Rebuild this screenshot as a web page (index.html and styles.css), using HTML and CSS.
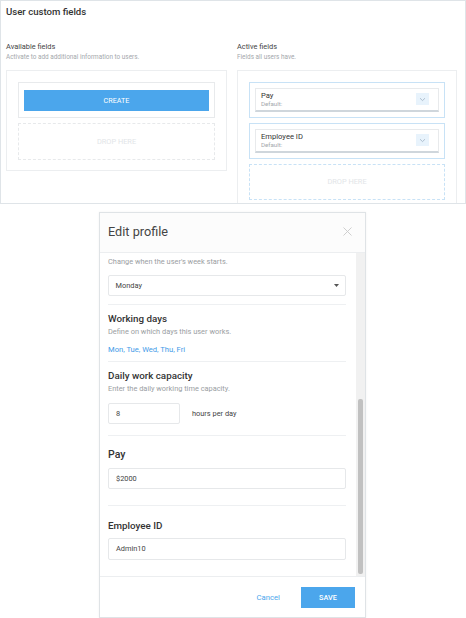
FILE: index.html
```html
<!DOCTYPE html>
<html>
<head>
<meta charset="utf-8">
<link rel="stylesheet" href="styles.css">
</head>
<body>
<div class="page">
  <section class="fields-panel">
    <h1 class="panel-title">User custom fields</h1>
    <div class="columns">
      <div class="column">
        <h2 class="col-title">Available fields</h2>
        <p class="col-sub">Activate to add additional information to users.</p>
        <div class="col-box">
          <div class="create-card"><button class="create-btn">CREATE</button></div>
          <div class="drop drop-gray">DROP HERE</div>
        </div>
      </div>
      <div class="column">
        <h2 class="col-title">Active fields</h2>
        <p class="col-sub">Fields all users have.</p>
        <div class="col-box col-box-open">
          <div class="active-item">
            <div class="field-card">
              <div class="field-text">
                <div class="field-name">Pay</div>
                <div class="field-default">Default:</div>
              </div>
              <span class="chev"><svg width="7" height="5" viewBox="0 0 7 5"><path d="M1 1.2 L3.5 3.6 L6 1.2" fill="none" stroke="#9fb3c4" stroke-width="0.8"/></svg></span>
            </div>
          </div>
          <div class="active-item">
            <div class="field-card">
              <div class="field-text">
                <div class="field-name">Employee ID</div>
                <div class="field-default">Default:</div>
              </div>
              <span class="chev"><svg width="7" height="5" viewBox="0 0 7 5"><path d="M1 1.2 L3.5 3.6 L6 1.2" fill="none" stroke="#9fb3c4" stroke-width="0.8"/></svg></span>
            </div>
          </div>
          <div class="drop drop-blue">DROP HERE</div>
        </div>
      </div>
    </div>
  </section>

  <div class="modal-wrap">
    <div class="modal">
      <header class="modal-head">
        <span class="modal-title">Edit profile</span>
        <svg class="close" width="9" height="9" viewBox="0 0 9 9"><path d="M0.5 0.5 L8.5 8.5 M8.5 0.5 L0.5 8.5" stroke="#c9c9c9" stroke-width="0.9"/></svg>
      </header>
      <div class="modal-body">
        <div class="scroll-content">
          <div class="sec sec-week">
            <p class="sec-sub">Change when the user's week starts.</p>
            <div class="select">
              <span>Monday</span>
              <svg width="5" height="3" viewBox="0 0 5 3"><path d="M0 0 H5 L2.5 3 Z" fill="#555"/></svg>
            </div>
          </div>
          <div class="sec sec-days">
            <h3 class="sec-title">Working days</h3>
            <p class="sec-sub sub-tight">Define on which days this user works.</p>
            <p class="days">Mon, Tue, Wed, Thu, Fri</p>
          </div>
          <div class="sec sec-cap">
            <h3 class="sec-title">Daily work capacity</h3>
            <p class="sec-sub sub-tight">Enter the daily working time capacity.</p>
            <div class="cap-row">
              <div class="input input-short">8</div>
              <span class="cap-unit">hours per day</span>
            </div>
          </div>
          <div class="sec sec-pay">
            <h3 class="sec-title">Pay</h3>
            <div class="input input-pay">$2000</div>
          </div>
          <div class="sec sec-emp">
            <h3 class="sec-title">Employee ID</h3>
            <div class="input input-emp">Admin10</div>
          </div>
        </div>
        <div class="scroll-track"><div class="scroll-thumb"></div></div>
      </div>
      <footer class="modal-foot">
        <a class="cancel">Cancel</a>
        <button class="save">SAVE</button>
      </footer>
    </div>
  </div>
</div>
</body>
</html>
```
FILE: styles.css
```css
* { box-sizing: border-box; }
html, body { margin: 0; padding: 0; background: #ffffff; }
body { font-family: Roboto, "Liberation Sans", sans-serif; color: #333; width: 466px; height: 618px; overflow: hidden; }
p, h1, h2, h3 { margin: 0; font-weight: normal; }

.fields-panel {
  height: 204px;
  width: 466px;
  border: 1px solid #dfe4e8;
  padding: 4px 9px 0 5px;
  overflow: hidden;
  background: #fff;
}
.panel-title { font-size: 9.6px; font-weight: 500; line-height: 13px; color: #333; }
.columns { display: grid; grid-template-columns: 221px 220px; column-gap: 10px; margin-top: 23px; }
.col-title { font-size: 7.4px; line-height: 11px; color: #444; }
.col-sub { font-size: 6.4px; line-height: 9px; color: #a4a8ac; margin-top: 1px; }
.col-box { border: 1px solid #eceef0; margin-top: 7.5px; padding: 11px 11px 10px; display: flex; flex-direction: column; gap: 5px; }
.col-box-open { border-bottom: none; height: 160px; }
.create-card { border: 1px solid #e8eaec; padding: 7px 5px; height: 36px; }
.create-btn { width: 100%; height: 21px; border: none; background: #4ba6ec; color: #fff; font-family: Roboto, sans-serif; font-size: 7.2px; padding: 0; display: block; }
.drop { height: 36px; display: flex; align-items: center; justify-content: center; font-size: 7.4px; color: #e2e5e8; }
.drop-gray { border: 1px dashed #e7e9eb; height: 37px; }
.drop-blue { border: 1px dashed #c8e2f6; }
.active-item { border: 1px solid #c8e2f6; padding: 5px 5px 6px; height: 36px; }
.field-card { border: 1px solid #e8eaec; border-bottom: 2px solid #cfd6dc; height: 24.5px; display: flex; align-items: center; padding: 0 9px 0 5px; background: #fff; }
.field-text { flex: 1; }
.field-name { font-size: 7.6px; line-height: 9px; color: #333; }
.field-default { font-size: 6.2px; line-height: 8px; color: #a4a8ac; }
.chev { width: 13px; height: 12px; background: #e8f3fc; display: flex; align-items: center; justify-content: center; }

.modal-wrap { display: flex; justify-content: flex-start; padding-left: 99px; margin-top: 8px; }
.modal { width: 267px; height: 406px; border: 1px solid #dfe3e6; display: flex; flex-direction: column; background: #fff; box-shadow: 0 0 2px rgba(0,0,0,0.06); }
.modal-head { height: 40px; border-bottom: 1px solid #eceef0; display: flex; align-items: center; justify-content: space-between; padding: 0 13px 2px 8px; background: #fcfcfc; flex: none; }
.modal-title { font-size: 12.7px; color: #444; }
.modal-body { flex: 1; display: flex; min-height: 0; }
.scroll-content { flex: 1; padding: 0 10px 0 8px; }
.scroll-track { width: 9px; background: #f1f1f1; display: flex; flex-direction: column; justify-content: flex-end; padding: 0 2px 2px 2px; }
.scroll-thumb { height: 175px; background: #c1c1c1; border-radius: 2px; }

.sec { border-bottom: 1px solid #eef0f2; }
.sec:last-child { border-bottom: none; }
.sec-sub { font-size: 7.4px; line-height: 10px; color: #9a9ea2; }
.sub-tight { margin-top: 2px; }
.sec-title { font-size: 9.8px; line-height: 12px; font-weight: 500; color: #333; }
.sec-week { padding: 4px 0 8px; }
.select { margin-top: 7.5px; height: 21.5px; border: 1px solid #e6e8ea; border-radius: 2px; display: flex; align-items: center; justify-content: space-between; padding: 0 6px 0 6.5px; font-size: 7.4px; color: #444; }
.sec-days { padding: 7.5px 0 5.5px; }
.days { font-size: 7.6px; line-height: 10px; color: #3f9be8; margin-top: 8.5px; }
.sec-cap { padding: 8px 0 11px; }
.cap-row { display: flex; align-items: center; margin-top: 9px; }
.input { height: 21.5px; border: 1px solid #e6e8ea; border-radius: 2px; display: flex; align-items: center; padding: 0 7px; font-size: 7.4px; color: #444; }
.input-short { width: 72px; }
.cap-unit { font-size: 7.4px; color: #444; margin-left: 12px; }
.sec-pay { padding: 12.7px 0 16px; }
.sec-pay .sec-title { font-size: 10.5px; }
.sec-pay .input { margin-top: 7.3px; }
.sec-emp { padding: 13.6px 0 0; }
.sec-emp .input { margin-top: 6px; }

.modal-foot { height: 41px; border-top: 1px solid #eceef0; display: flex; align-items: center; justify-content: flex-end; padding: 0 10px 0 0; flex: none; }
.cancel { font-size: 7.7px; color: #4ba6ec; margin-right: 21px; }
.save { width: 54px; height: 21px; border: none; background: #4ba6ec; color: #fff; font-family: Roboto, sans-serif; font-size: 7.3px; font-weight: 500; padding: 0; }
```
